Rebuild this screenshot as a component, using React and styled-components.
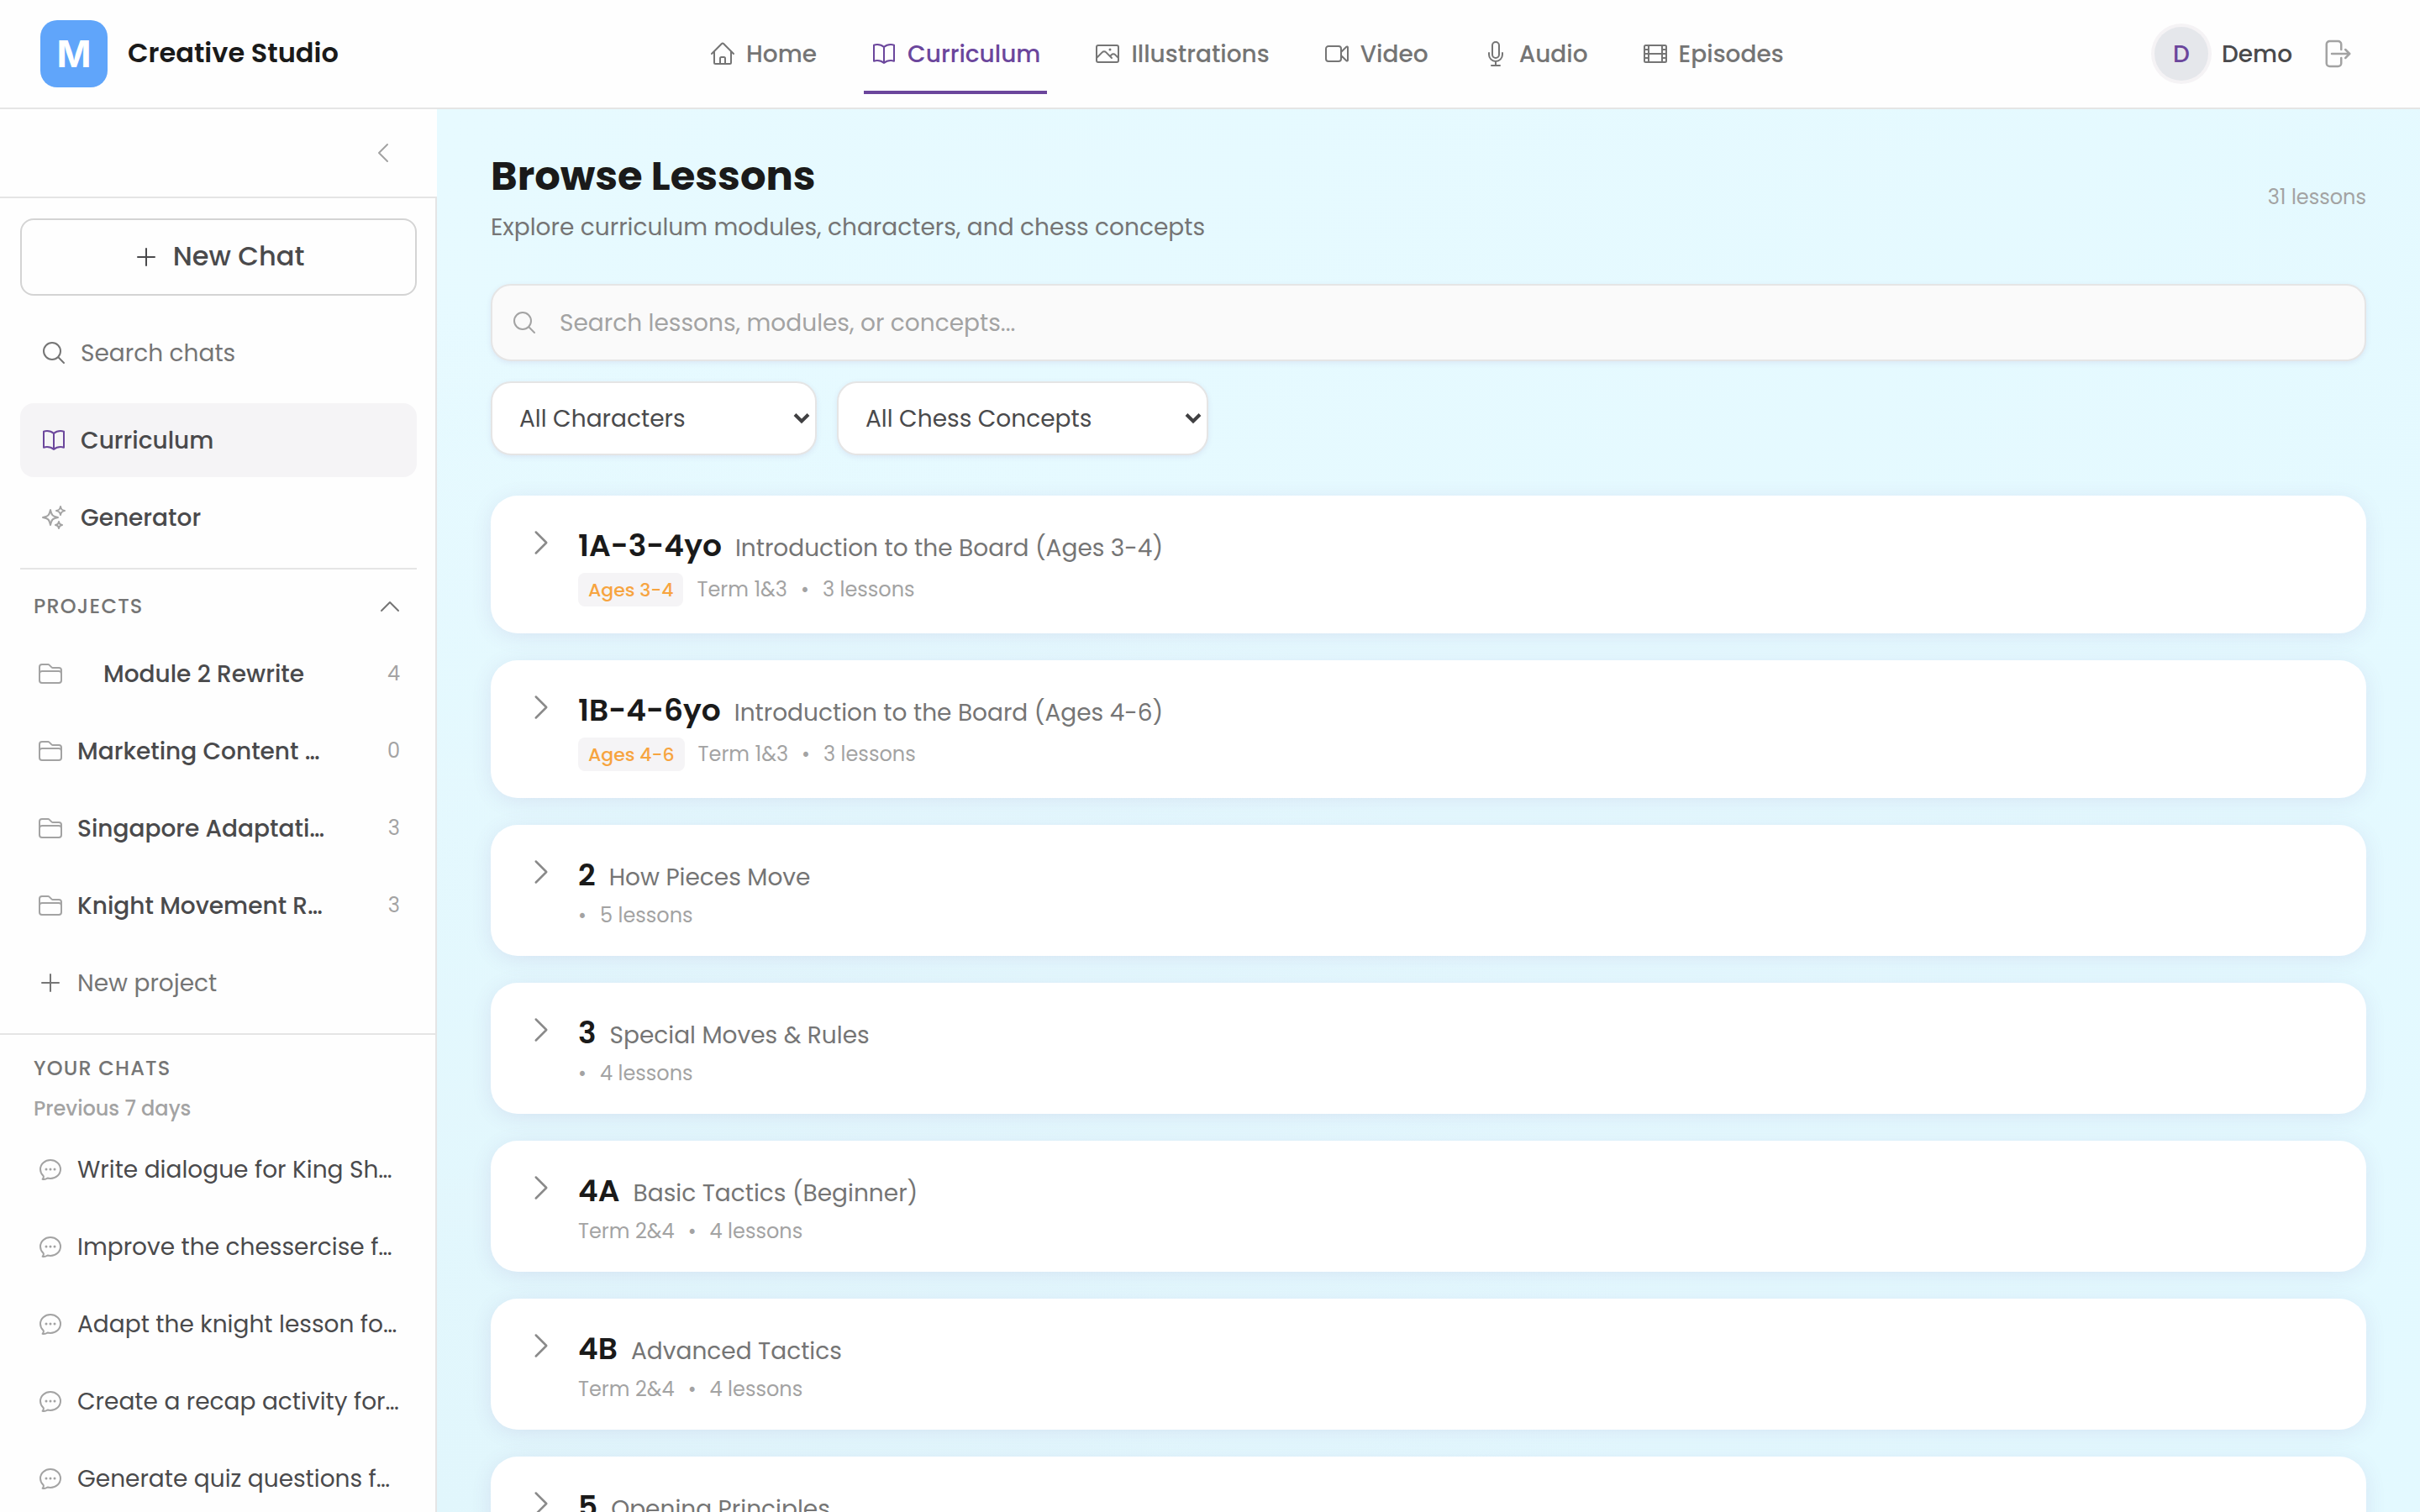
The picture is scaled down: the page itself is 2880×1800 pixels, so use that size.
import styled, { createGlobalStyle } from 'styled-components'
import {
  HiOutlineHome,
  HiOutlineBookOpen,
  HiOutlinePhoto,
  HiOutlineVideoCamera,
  HiOutlineMicrophone,
  HiOutlineFilm,
  HiOutlineArrowRightOnRectangle,
  HiOutlineChevronLeft,
  HiOutlineChevronRight,
  HiOutlineChevronUp,
  HiOutlinePlus,
  HiOutlineMagnifyingGlass,
  HiOutlineSparkles,
  HiOutlineFolder,
  HiOutlineChatBubbleOvalLeftEllipsis,
} from 'react-icons/hi2'

const navItems = [
  { label: 'Home', icon: HiOutlineHome },
  { label: 'Curriculum', icon: HiOutlineBookOpen, active: true },
  { label: 'Illustrations', icon: HiOutlinePhoto },
  { label: 'Video', icon: HiOutlineVideoCamera },
  { label: 'Audio', icon: HiOutlineMicrophone },
  { label: 'Episodes', icon: HiOutlineFilm },
]

const projects = [
  { name: 'Module 2 Rewrite', count: 4, indent: true },
  { name: 'Marketing Content …', count: 0 },
  { name: 'Singapore Adaptati…', count: 3 },
  { name: 'Knight Movement R…', count: 3 },
]

const chats = [
  'Write dialogue for King Sh…',
  'Improve the chessercise f…',
  'Adapt the knight lesson fo…',
  'Create a recap activity for…',
  'Generate quiz questions f…',
]

const modules = [
  { code: '1A-3-4yo', title: 'Introduction to the Board (Ages 3-4)', ages: 'Ages 3-4', term: 'Term 1&3', lessons: 3 },
  { code: '1B-4-6yo', title: 'Introduction to the Board (Ages 4-6)', ages: 'Ages 4-6', term: 'Term 1&3', lessons: 3 },
  { code: '2', title: 'How Pieces Move', lessons: 5 },
  { code: '3', title: 'Special Moves & Rules', lessons: 4 },
  { code: '4A', title: 'Basic Tactics (Beginner)', term: 'Term 2&4', lessons: 4 },
  { code: '4B', title: 'Advanced Tactics', term: 'Term 2&4', lessons: 4 },
  { code: '5', title: 'Opening Principles', lessons: 4 },
]

export default function App() {
  return (
    <Page>
      <GlobalStyle />
      <Header>
        <Brand>
          <Logo>M</Logo>
          <BrandName>Creative Studio</BrandName>
        </Brand>
        <Nav>
          {navItems.map(({ label, icon: Icon, active }) => (
            <NavLink key={label} $active={active}>
              <Icon size={32} />
              <Label>{label}</Label>
            </NavLink>
          ))}
        </Nav>
        <User>
          <Avatar>D</Avatar>
          <UserName>Demo</UserName>
          <HiOutlineArrowRightOnRectangle size={40} />
        </User>
      </Header>

      <Body>
        <Sidebar>
          <SidebarTop>
            <HiOutlineChevronLeft size={32} />
          </SidebarTop>
          <SidebarBody>
            <SidebarMenu>
              <NewChat>
                <HiOutlinePlus size={32} />
                <span>New Chat</span>
              </NewChat>
              <SearchChats>
                <HiOutlineMagnifyingGlass size={32} />
                <Label>Search chats</Label>
              </SearchChats>
              <MenuItem $active>
                <HiOutlineBookOpen size={32} />
                <Label>Curriculum</Label>
              </MenuItem>
              <MenuItem>
                <HiOutlineSparkles size={32} />
                <Label>Generator</Label>
              </MenuItem>
            </SidebarMenu>
            <Projects>
              <SectionHead>
                <SectionTitle>PROJECTS</SectionTitle>
                <HiOutlineChevronUp size={32} />
              </SectionHead>
              {projects.map((p) => (
                <ProjectRow key={p.name}>
                  <HiOutlineFolder size={32} />
                  <ProjectName $indent={p.indent}>{p.name}</ProjectName>
                  <Count>{p.count}</Count>
                </ProjectRow>
              ))}
              <NewProject>
                <HiOutlinePlus size={32} />
                <Label>New project</Label>
              </NewProject>
            </Projects>
            <Chats>
              <SectionTitle>YOUR CHATS</SectionTitle>
              <Period>Previous 7 days</Period>
              {chats.map((c) => (
                <ChatRow key={c}>
                  <HiOutlineChatBubbleOvalLeftEllipsis size={32} />
                  <Label>{c}</Label>
                </ChatRow>
              ))}
            </Chats>
          </SidebarBody>
        </Sidebar>

        <Main>
          <PageHead>
            <div>
              <Title>Browse Lessons</Title>
              <Subtitle>Explore curriculum modules, characters, and chess concepts</Subtitle>
            </div>
            <Total>31 lessons</Total>
          </PageHead>
          <SearchBar>
            <HiOutlineMagnifyingGlass size={32} />
            <Label>Search lessons, modules, or concepts...</Label>
          </SearchBar>
          <Filters>
            <Select $width={388}>
              <Label>All Characters</Label>
              <SelectArrow />
            </Select>
            <Select $width={442}>
              <Label>All Chess Concepts</Label>
              <SelectArrow />
            </Select>
          </Filters>
          <ModuleList>
            {modules.map((m) => (
              <ModuleCard key={m.code} $tall={!!m.ages}>
                <HiOutlineChevronRight size={40} />
                <div>
                  <ModuleTitle>
                    <Code>{m.code}</Code>
                    <Name>{m.title}</Name>
                  </ModuleTitle>
                  <Meta $tall={!!m.ages}>
                    {m.ages && <Ages>{m.ages}</Ages>}
                    {m.term && <span>{m.term}</span>}
                    <Dot>•</Dot>
                    <span>{m.lessons} lessons</span>
                  </Meta>
                </div>
              </ModuleCard>
            ))}
          </ModuleList>
        </Main>
      </Body>
    </Page>
  )
}

const SelectArrow = () => (
  <svg width="20" height="14" viewBox="0 0 20 14" fill="none" stroke="#404042" strokeWidth="4">
    <path d="M2 2.5l8 8 8-8" />
  </svg>
)

const GlobalStyle = createGlobalStyle`
* {
  box-sizing: border-box;
}
body {
  margin: 0;
  overflow: hidden;
  font-family: Poppins, Inter, sans-serif;
  line-height: 1.5;
  color: #1a1a1a;
}
svg {
  flex-shrink: 0;
}
`

const Page = styled.div`
width: 2880px;
height: 1800px;
overflow: hidden;
display: flex;
flex-direction: column;
background: #e5f9ff;
`

const Label = styled.span`
padding-top: 2px;
`

const Header = styled.header`
height: 130px;
flex-shrink: 0;
display: flex;
justify-content: space-between;
align-items: center;
padding: 0 80px 0 48px;
background: #fefefe;
border-bottom: 2px solid #e5e5e5;
`

const Brand = styled.div`
display: flex;
align-items: center;
gap: 24px;
`

const Logo = styled.div`
width: 80px;
height: 80px;
border-radius: 20px;
display: flex;
align-items: center;
justify-content: center;
background: #60a5fa;
color: #fff;
font: 700 44px Inter, sans-serif;
`

const BrandName = styled.span`
padding-bottom: 2px;
font-size: 32px;
font-weight: 600;
line-height: 48px;
`

const Nav = styled.nav`
display: flex;
gap: 48px;
height: 96px;
`

const NavLink = styled.a`
display: flex;
align-items: center;
gap: 12px;
padding: 0 8px;
font-size: 28px;
font-weight: 500;
color: ${(p) => (p.$active ? '#6b469c' : '#757575')};
border-bottom: 4px solid ${(p) => (p.$active ? '#6b469c' : 'transparent')};
border-top: 4px solid transparent;
`

const User = styled.div`
display: flex;
align-items: center;
color: #a3a3a3;
`

const Avatar = styled.div`
width: 64px;
height: 64px;
padding-top: 2px;
border-radius: 50%;
background: #e5e7eb;
box-shadow: 0 0 0 4px #f5f3f5;
display: flex;
align-items: center;
justify-content: center;
font-size: 28px;
font-weight: 500;
color: #6b469c;
`

const UserName = styled(Label)`
margin: 0 32px 0 16px;
font-size: 28px;
font-weight: 500;
color: #4a4a4c;
`

const Body = styled.div`
display: flex;
flex: 1;
min-height: 0;
`

const Sidebar = styled.aside`
width: 520px;
flex-shrink: 0;
display: flex;
flex-direction: column;
background: #fefefe;
overflow: hidden;
`

const SidebarTop = styled.div`
height: 106px;
flex-shrink: 0;
display: flex;
align-items: center;
justify-content: flex-end;
padding-right: 48px;
color: #a3a3a3;
border-bottom: 2px solid #e5e5e5;
`

const SidebarBody = styled.div`
flex: 1;
border-right: 2px solid #e5e5e5;
`

const SidebarMenu = styled.div`
padding: 24px 22px 0 24px;
`

const NewChat = styled.button`
width: 472px;
height: 92px;
display: flex;
align-items: center;
justify-content: center;
gap: 16px;
border: 2px solid #d4d4d4;
border-radius: 16px;
background: #fefefe;
font-family: inherit;
font-size: 32px;
font-weight: 500;
line-height: normal;
color: #4a4a4c;
span {
  padding-bottom: 2px;
}
`

const MenuItem = styled.div`
height: 88px;
display: flex;
align-items: center;
gap: 16px;
margin-bottom: 4px;
padding: 0 24px;
border-radius: 16px;
background: ${(p) => (p.$active ? '#f5f4f6' : 'transparent')};
font-size: 28px;
font-weight: 500;
color: #4a4a4c;
svg {
  color: ${(p) => (p.$active ? '#6b469c' : '#a3a3a3')};
}
`

const SearchChats = styled(MenuItem)`
margin: 24px 0 16px;
font-weight: 400;
color: #757575;
svg {
  color: #757575;
}
`

const Projects = styled.div`
margin: 16px 22px 0 24px;
padding-top: 14px;
border-top: 2px solid #e5e5e5;
`

const SectionHead = styled.div`
height: 60px;
display: flex;
align-items: center;
justify-content: space-between;
margin-bottom: 6px;
padding: 0 16px;
color: #757575;
`

const SectionTitle = styled.div`
font-size: 24px;
font-weight: 500;
line-height: 36px;
letter-spacing: 1.2px;
color: #757575;
`

const ProjectRow = styled.div`
height: 88px;
display: flex;
align-items: center;
gap: 16px;
margin-bottom: 4px;
padding: 0 20px;
color: #a3a3a3;
`

const ProjectName = styled(Label)`
flex: 1;
padding-left: ${(p) => (p.$indent ? '31px' : '0')};
font-size: 28px;
font-weight: 500;
white-space: nowrap;
color: #4a4a4c;
`

const Count = styled.span`
font-size: 24px;
`

const NewProject = styled(ProjectRow)`
font-size: 28px;
color: #757575;
`

const Chats = styled.div`
margin-top: 16px;
padding: 22px 40px 0;
border-top: 2px solid #e5e5e5;
`

const Period = styled.div`
margin: 12px 0 10px;
font-size: 24px;
font-weight: 500;
line-height: 36px;
color: #a3a3a3;
`

const ChatRow = styled.div`
height: 88px;
display: flex;
align-items: center;
gap: 16px;
margin: 0 0 4px 4px;
font-size: 28px;
white-space: nowrap;
color: #4a4a4c;
svg {
  color: #a3a3a3;
}
`

const Main = styled.main`
flex: 1;
padding: 48px 64px 0;
background: radial-gradient(circle at 0 100%, #e1f6fc 0%, rgba(225, 246, 252, 0) 50%),
  linear-gradient(135deg, #e7faff 0%, #e3f9ff 100%);
`

const PageHead = styled.div`
display: flex;
align-items: center;
justify-content: space-between;
`

const Title = styled.h1`
margin: 0;
font-size: 48px;
font-weight: 700;
line-height: 64px;
`

const Subtitle = styled.p`
margin: 8px 0 0;
font-size: 28px;
line-height: 42px;
color: #757575;
`

const Total = styled.span`
font-size: 24px;
line-height: 36px;
color: #a3a3a3;
`

const SearchBar = styled.div`
height: 92px;
margin-top: 46px;
display: flex;
align-items: center;
gap: 26px;
padding: 0 22px;
border: 2px solid #e5e5e5;
border-radius: 24px;
background: #fafafa;
box-shadow: 0 2px 6px rgba(107, 70, 156, 0.1);
font-size: 28px;
color: #a3a3a3;
`

const Filters = styled.div`
display: flex;
gap: 24px;
margin-top: 24px;
`

const Select = styled.div`
width: ${(p) => p.$width}px;
height: 88px;
display: flex;
align-items: center;
justify-content: space-between;
padding: 0 6px 0 32px;
border: 2px solid #e5e5e5;
border-radius: 24px;
background: #fff;
box-shadow: 0 2px 6px rgba(107, 70, 156, 0.1);
font-size: 28px;
color: #4a4a4c;
`

const ModuleList = styled.div`
display: flex;
flex-direction: column;
gap: 32px;
margin-top: 48px;
`

const ModuleCard = styled.section`
height: ${(p) => (p.$tall ? '164px' : '156px')};
flex-shrink: 0;
display: flex;
gap: 24px;
padding: 36px 40px 0;
border-radius: 32px;
background: #fff;
box-shadow: 0 4px 24px rgba(107, 70, 156, 0.11);
> svg {
  color: #8a8a8a;
}
`

const ModuleTitle = styled.div`
height: 48px;
display: flex;
align-items: baseline;
gap: 16px;
line-height: 48px;
`

const Code = styled.span`
font-size: 36px;
font-weight: 600;
`

const Name = styled.span`
font-size: 28px;
color: #757575;
`

const Meta = styled.div`
height: 40px;
display: flex;
align-items: center;
gap: 16px;
margin-top: ${(p) => (p.$tall ? '8px' : '4px')};
font-size: 24px;
color: #a3a3a3;
`

const Ages = styled.span`
height: 40px;
padding: 0 12px;
border-radius: 8px;
background: #f5f4f6;
font-size: 22px;
font-weight: 500;
line-height: 42px;
color: #f7a440;
`

const Dot = styled.span`
width: 10px;
text-align: center;
`
